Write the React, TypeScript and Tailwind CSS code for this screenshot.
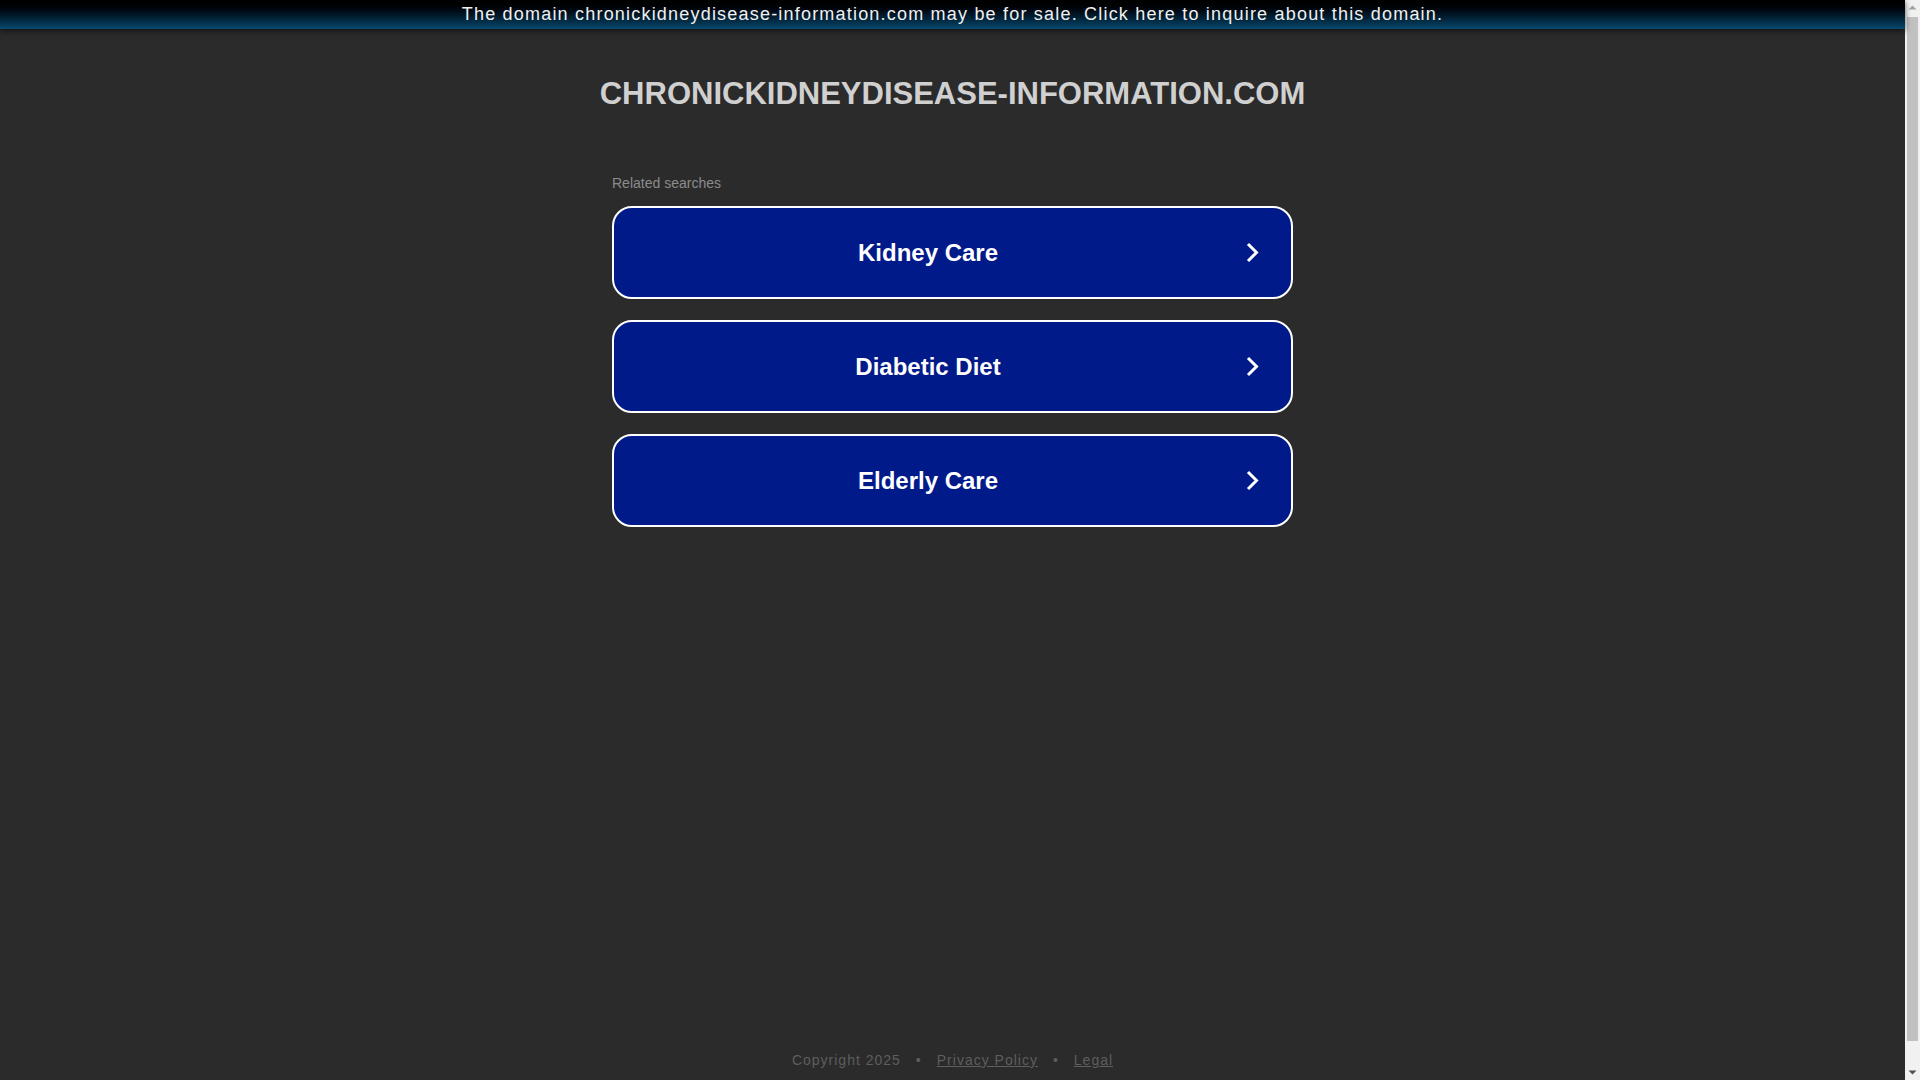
import React from "react";

const items = ["Kidney Care", "Diabetic Diet", "Elderly Care"];

function Chevron() {
  return (
    <svg width="13" height="21" viewBox="0 0 13 21" className="ml-[4px] mr-[32px] shrink-0">
      <polyline points="2,2 10.5,10.5 2,19" fill="none" stroke="#ffffff" strokeWidth="3" strokeLinecap="butt" strokeLinejoin="miter" />
    </svg>
  );
}

function ScrollBar() {
  return (
    <div className="flex h-full w-[15px] shrink-0 flex-col items-center bg-[#f1f1f1]">
      <svg width="15" height="15" viewBox="0 0 15 15" className="shrink-0">
        <polygon points="3.5,9.5 7.5,5.5 11.5,9.5" fill="#a3a3a3" />
      </svg>
      <div className="mt-[2px] w-[11px] flex-1 bg-[#c1c1c1]" />
      <div className="h-[24px] shrink-0" />
      <svg width="15" height="15" viewBox="0 0 15 15" className="shrink-0">
        <polygon points="3.5,5.5 11.5,5.5 7.5,9.5" fill="#505050" />
      </svg>
    </div>
  );
}

export default function App() {
  return (
    <div
      className="flex h-screen overflow-hidden bg-[#2b2b2b]"
      style={{ fontFamily: '"Liberation Sans", Arial, sans-serif' }}
    >
      <div className="flex h-full min-w-0 flex-1 flex-col">
        <div className="relative z-10 flex h-[29px] shrink-0 items-center justify-center bg-gradient-to-b from-black to-[#06496f] shadow-[0_2px_6px_rgba(0,0,0,0.6)]">
          <span className="whitespace-nowrap text-[18px] leading-[29px] tracking-[1.2px] text-[#f0f0f0]">
            The domain chronickidneydisease-information.com may be for sale. Click here to inquire about this domain.
          </span>
        </div>

        <h1 className="mt-[47px] text-center text-[31px] font-bold leading-[36px] text-[#d0d0d0]">
          CHRONICKIDNEYDISEASE-INFORMATION.COM
        </h1>

        <div className="mx-auto mt-[61px] w-[681px]">
          <div className="text-[14px] leading-[20px] text-[#8c8c8c]">Related searches</div>
          <div className="mt-[13px] flex flex-col gap-[21px]">
            {items.map((t) => (
              <div
                key={t}
                className="flex h-[93px] items-center rounded-[20px] border-2 border-white bg-[#011a8a]"
              >
                <span className="flex-1 text-center text-[24px] font-bold text-white">{t}</span>
                <Chevron />
              </div>
            ))}
          </div>
        </div>

        <div className="mt-auto mb-[10px] flex items-center justify-center text-[14px] leading-[20px] tracking-[1px] text-[#5e5e5e]">
          <span>Copyright 2025</span>
          <span className="mx-[15px]">•</span>
          <a className="underline">Privacy Policy</a>
          <span className="mx-[15px]">•</span>
          <a className="underline">Legal</a>
        </div>
      </div>
      <ScrollBar />
    </div>
  );
}
